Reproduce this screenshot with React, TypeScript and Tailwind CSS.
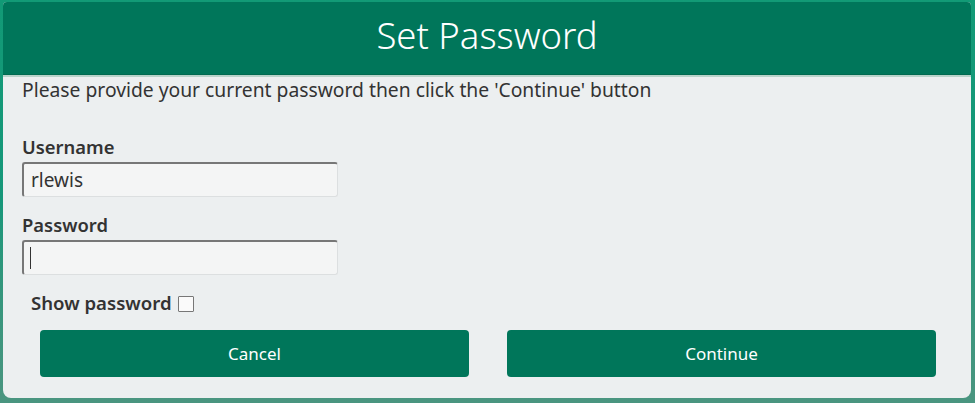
export default function App() {
  return (
    <div className="w-[975px] h-[403px] bg-gradient-to-b from-[#129a76] via-[#16977a] to-[#4a9580] pt-[2px] pl-[3px] pr-[4px] font-['Noto_Sans',sans-serif]">
      <div className="w-[968px] h-[396px] bg-[#eceff0] rounded-t-[4px] rounded-b-[8px] overflow-hidden flex flex-col">
        <div className="h-[73px] bg-[#00765a] border-b border-[#006a50] flex items-center justify-center">
          <h1 className="text-[36.5px] font-light text-white -mt-[6px]">Set Password</h1>
        </div>
        <div className="h-[2px] bg-[#b8d3ca]" />
        <div className="px-[19px] pt-[1px]">
          <p className="text-[19.3px] text-[#333] leading-[24px]">
            Please provide your current password then click the 'Continue' button
          </p>

          <label className="block mt-[34px] text-[18.4px] font-semibold text-[#333] leading-[22px]">Username</label>
          <input
            readOnly
            value="rlewis"
            className="mt-[4px] w-[316px] h-[35px] bg-[#f4f5f5] rounded-[3px] border border-[#dcdfe0] border-t-[#777] border-l-[#777] border-t-2 border-l-2 px-[7px] text-[19px] text-[#333] outline-none"
          />

          <label className="block mt-[17px] text-[18.4px] font-semibold text-[#333] leading-[22px]">Password</label>
          <div className="mt-[4px] w-[316px] h-[35px] bg-[#f4f5f5] rounded-[3px] border border-[#dcdfe0] border-t-[#777] border-l-[#777] border-t-2 border-l-2 flex items-center pl-[6px]">
            <span className="w-px h-[22px] bg-[#333]" />
          </div>

          <div className="mt-[17px] pl-[9px] flex items-center gap-[6px]">
            <span className="text-[18.6px] font-semibold text-[#333] leading-[22px]">Show password</span>
            <span className="w-[16px] h-[16px] border border-[#777] bg-[#fafafa] rounded-[1px] mt-[2px]" />
          </div>

          <div className="mt-[16px] pl-[18px] flex gap-[38px]">
            <button className="w-[429px] h-[47px] bg-[#00765a] rounded-[4px] text-white text-[17px]">Cancel</button>
            <button className="w-[429px] h-[47px] bg-[#00765a] rounded-[4px] text-white text-[17px]">Continue</button>
          </div>
        </div>
      </div>
    </div>
  )
}
